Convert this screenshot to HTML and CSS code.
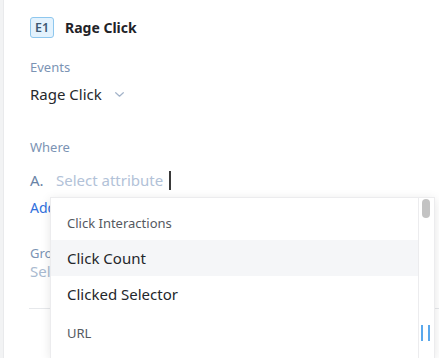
FILE: index.html
```html
<!DOCTYPE html>
<html>
<head>
<meta charset="utf-8">
<link rel="stylesheet" href="styles.css">
</head>
<body>
<div class="page">
  <div class="strip"></div>
  <div class="panel">
    <div class="head"><span class="badge">E1</span><span class="title">Rage Click</span></div>
    <div class="label events">Events</div>
    <div class="value">Rage Click
      <svg class="chev" width="9" height="5" viewBox="0 0 9 5"><path d="M0.7 0.7 L4.5 4.2 L8.3 0.7" fill="none" stroke="#a3b3c9" stroke-width="1.2" stroke-linecap="round" stroke-linejoin="round"/></svg>
    </div>
    <div class="label where">Where</div>
    <div class="attr"><span class="letter">A.</span><span class="ph">Select attribute</span><span class="caret"></span></div>
    <div class="add">Add filter</div>
    <div class="label group">Group by</div>
    <div class="sel">Select property</div>
    <div class="divider"></div>
  </div>
  <div class="dropdown">
    <div class="list">
      <div class="hdr first">Click Interactions</div>
      <div class="item active">Click Count</div>
      <div class="item">Clicked Selector</div>
      <div class="hdr">URL</div>
    </div>
    <div class="track">
      <div class="thumb"></div>
      <div class="bars"><span class="bar"></span><span class="bar"></span></div>
    </div>
  </div>
</div>
</body>
</html>
```
FILE: styles.css
```css
html, body {
  margin: 0;
  padding: 0;
  background: #fff;
  overflow: hidden;
}
body {
  font-family: "Noto Sans", "Open Sans", sans-serif;
  width: 439px;
  height: 358px;
}
.page {
  position: relative;
  display: flex;
  width: 439px;
  height: 358px;
  overflow: hidden;
}
.strip {
  width: 3px;
  background: #f2f3f4;
  border-right: 1px solid #e9eaec;
}
.panel {
  flex: 1;
  display: flex;
  flex-direction: column;
  padding-left: 26px;
}
.head {
  display: flex;
  align-items: center;
  margin-top: 17px;
  height: 21px;
}
.badge {
  box-sizing: border-box;
  width: 24px;
  height: 21px;
  border: 1px solid #8ec7ee;
  border-radius: 3px;
  background: #e3f2fd;
  color: #3d5873;
  font-size: 12.5px;
  font-weight: 600;
  line-height: 19px;
  text-align: center;
}
.title {
  margin-left: 11px;
  font-size: 14px;
  font-weight: 700;
  color: #1f2328;
}
.label {
  font-size: 13px;
  line-height: 18px;
  color: #7b93b4;
}
.events { margin-top: 20px; }
.value {
  margin-top: 7px;
  font-size: 15px;
  line-height: 22px;
  color: #25282c;
  display: flex;
  align-items: center;
}
.chev { margin-left: 13px; margin-top: 1px; }
.where { margin-top: 33px; }
.attr {
  margin-top: 13px;
  display: flex;
  align-items: center;
  font-size: 15px;
  line-height: 22px;
}
.letter { color: #6983a6; width: 26px; }
.ph { color: #b2c2d8; }
.caret {
  width: 1.5px;
  height: 19px;
  background: #3a3a3a;
  margin-left: 6px;
}
.add {
  margin-top: 8px;
  font-size: 14px;
  line-height: 18px;
  color: #2f6fdc;
}
.group { margin-top: 28px; line-height: 16px; }
.sel {
  font-size: 15px;
  line-height: 20px;
  color: #a9bad0;
}
.divider {
  margin-top: 27px;
  margin-left: -1px;
  height: 1px;
  background: #e6e8eb;
}
.dropdown {
  position: absolute;
  left: 50px;
  top: 197px;
  width: 385px;
  height: 161px;
  box-sizing: border-box;
  background: #fff;
  border: 1px solid #ececee;
  border-bottom: none;
  box-shadow: 0 2px 10px rgba(0, 0, 0, 0.10);
  display: flex;
}
.list {
  flex: 1;
  padding-top: 9px;
}
.hdr {
  padding-left: 16px;
  font-size: 13px;
  line-height: 34px;
  color: #55595f;
}
.hdr.first { line-height: 33px; }
.hdr:not(.first) { margin-top: 4px; }
.item {
  padding-left: 16px;
  font-size: 15px;
  line-height: 36px;
  color: #24272b;
}
.item.active { background: #f5f6f8; }
.track {
  width: 15px;
  border-left: 1px solid #ececee;
  display: flex;
  flex-direction: column;
}
.thumb {
  margin-top: 1px;
  margin-left: 3px;
  width: 8px;
  height: 19px;
  border-radius: 4px;
  background: #c3c3c3;
}
.bars {
  margin-top: 107px;
  margin-left: 2px;
  display: flex;
  gap: 5px;
}
.bar {
  width: 2px;
  height: 16px;
  background: #5aa8ec;
}
```
